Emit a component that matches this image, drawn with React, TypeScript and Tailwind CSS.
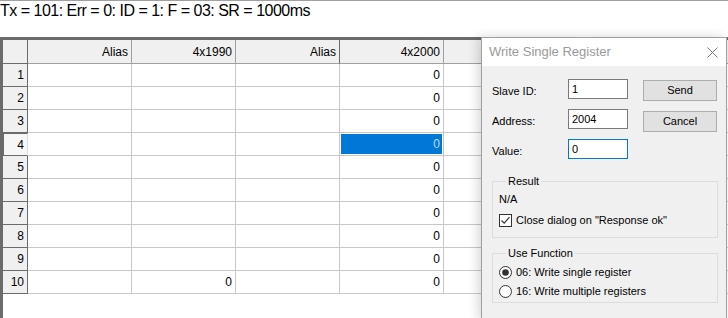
const columns = ['Alias', '4x1990', 'Alias', '4x2000', '', '', ''];

// values per row for each data column ('' = empty)
const rows = Array.from({ length: 10 }, (_, i) => {
  const n = i + 1;
  return {
    n,
    cells: ['', n === 10 ? '0' : '', '', '0', '', '', ''],
  };
});

function GridHeader() {
  return (
    <div className="flex h-[24px] shrink-0">
      <div className="w-[25px] shrink-0 bg-[#f0f0f0] border-r border-b border-[#6b6b6b]" />
      {columns.map((c, i) => (
        <div
          key={i}
          className={`w-[104px] shrink-0 bg-[#f0f0f0] border-b border-[#a0a0a0] border-r ${
            i === 2 ? 'border-r-[#6b6b6b]' : 'border-r-[#a0a0a0]'
          } flex items-center justify-end pr-[3px]`}
        >
          {c}
        </div>
      ))}
    </div>
  );
}

function GridRow({ n, cells }: { n: number; cells: string[] }) {
  const active = n === 4;
  return (
    <div className="flex h-[23px] shrink-0">
      <div
        className={`w-[25px] shrink-0 flex items-center justify-end pr-[3px] border-b border-[#6b6b6b] ${
          active ? 'bg-[#f7f7f7] border-t border-l border-l-[#6b6b6b] border-r border-r-[#dcdcdc]' : 'bg-[#f0f0f0] border-r'
        }`}
      >
        {n}
      </div>
      {cells.map((v, i) => (
        <div key={i} className="w-[104px] shrink-0 bg-white border-r border-b border-[#c8c8c8] flex">
          {active && i === 3 ? (
            <div className="m-[1px] flex-1 bg-[#0078d7] text-[#b9dcf8] flex items-center justify-end pr-[2px]">{v}</div>
          ) : (
            <div className="flex-1 flex items-center justify-end pr-[3px]">{v}</div>
          )}
        </div>
      ))}
    </div>
  );
}

function CheckBox() {
  return (
    <svg width="13" height="13" viewBox="0 0 13 13" className="shrink-0">
      <rect x="0.5" y="0.5" width="12" height="12" fill="#fff" stroke="#333" />
      <path d="M2.5 6.5 L5.2 9.2 L10.5 3.2" fill="none" stroke="#333" strokeWidth="1.2" />
    </svg>
  );
}

function Radio({ checked }: { checked?: boolean }) {
  return (
    <svg width="13" height="13" viewBox="0 0 13 13" className="shrink-0">
      <circle cx="6.5" cy="6.5" r="6" fill="#fff" stroke="#333" />
      {checked && <circle cx="6.5" cy="6.5" r="3.3" fill="#333" />}
    </svg>
  );
}

function WriteDialog() {
  const fields = [
    { label: 'Slave ID:', value: '1', focus: false },
    { label: 'Address:', value: '2004', focus: false },
    { label: 'Value:', value: '0', focus: true },
  ];
  return (
    <div className="absolute left-[481px] top-[37px] w-[246px] h-[282px] border border-[#a0a0a0] bg-[#f0f0f0] shadow-[-3px_0_10px_rgba(0,0,0,0.16)] flex flex-col text-[11px] text-black">
      {/* title bar */}
      <div className="h-[28px] bg-white flex items-center justify-between pl-[7px] pr-[8px]">
        <span className="text-[13px] text-[#9a9a9a]">Write Single Register</span>
        <svg width="11" height="11" viewBox="0 0 11 11">
          <path d="M0.5 0.5 L10.5 10.5 M10.5 0.5 L0.5 10.5" stroke="#777" strokeWidth="1" />
        </svg>
      </div>

      <div className="pl-[10px] pt-[13px] flex flex-col">
        <div className="flex">
          <div className="flex flex-col gap-[10px]">
            {fields.map((f) => (
              <div key={f.label} className="flex items-center h-[20px]">
                <span className="w-[76px] pt-[4px]">{f.label}</span>
                <div
                  className={`w-[60px] h-[20px] bg-white border flex items-center pl-[3px] ${
                    f.focus ? 'border-[#0078d7]' : 'border-[#7a7a7a]'
                  }`}
                >
                  {f.value}
                </div>
              </div>
            ))}
          </div>
          <div className="ml-[15px] mt-[1px] flex flex-col gap-[10px]">
            <div className="w-[74px] h-[21px] bg-[#e1e1e1] border border-[#adadad] flex items-center justify-center">Send</div>
            <div className="w-[74px] h-[21px] bg-[#e1e1e1] border border-[#adadad] flex items-center justify-center">Cancel</div>
          </div>
        </div>

        <fieldset className="mt-[16px] w-[226px] border border-[#dcdcdc] pl-[6px] pb-[10px]">
          <legend className="ml-[7px] px-[2px] leading-[13px]">Result</legend>
          <div className="mt-[5px] leading-[13px]">N/A</div>
          <div className="mt-[8px] flex items-center gap-[4px] leading-[13px]">
            <CheckBox />
            <span>Close dialog on "Response ok"</span>
          </div>
        </fieldset>

        <fieldset className="mt-[9px] w-[226px] border border-[#dcdcdc] pl-[6px] pb-[4px]">
          <legend className="ml-[7px] px-[2px] leading-[13px]">Use Function</legend>
          <div className="mt-[6px] flex items-center gap-[4px] leading-[13px]">
            <Radio checked />
            <span>06: Write single register</span>
          </div>
          <div className="mt-[6px] flex items-center gap-[4px] leading-[13px]">
            <Radio />
            <span>16: Write multiple registers</span>
          </div>
        </fieldset>
      </div>
    </div>
  );
}

export default function App() {
  return (
    <div className="relative w-[728px] h-[318px] overflow-hidden bg-white font-['Liberation_Sans',Arial,sans-serif] text-black flex flex-col">
      {/* status line */}
      <div className="h-[37px] shrink-0 border-t border-[#a0a0a0] text-[16px] tracking-[-0.5px] leading-[18px] pt-[1px] whitespace-nowrap">
        Tx = 101: Err = 0: ID = 1: F = 03: SR = 1000ms
      </div>

      {/* register grid */}
      <div className="flex-1 flex flex-col border-l-[3px] border-t-[3px] border-[#6b6b6b] text-[12px] leading-none overflow-hidden">
        <GridHeader />
        {rows.map((r) => (
          <GridRow key={r.n} n={r.n} cells={r.cells} />
        ))}
      </div>

      <WriteDialog />
    </div>
  );
}
